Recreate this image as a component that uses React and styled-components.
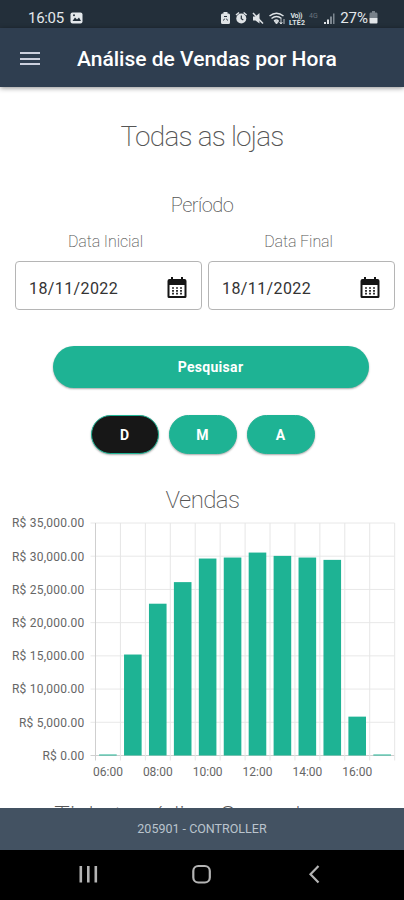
import styled, { createGlobalStyle } from 'styled-components'

const hours = [
  { hour: '06:00', total: 100 },
  { hour: '07:00', total: 15200 },
  { hour: '08:00', total: 22850 },
  { hour: '09:00', total: 26100 },
  { hour: '10:00', total: 29650 },
  { hour: '11:00', total: 29800 },
  { hour: '12:00', total: 30550 },
  { hour: '13:00', total: 30050 },
  { hour: '14:00', total: 29800 },
  { hour: '15:00', total: 29450 },
  { hour: '16:00', total: 5850 },
  { hour: '17:00', total: 100 },
]

const ticks = [0, 5000, 10000, 15000, 20000, 25000, 30000, 35000]

const formatMoney = (value) =>
  'R$ ' + value.toLocaleString('en-US', { minimumFractionDigits: 2 })

export default function App() {
  return (
    <Screen>
      <GlobalStyle />
      <StatusBar>
        <Clock>16:05</Clock>
        <PictureIcon />
        <Spacer />
        <StatusIcons />
        <Battery>27%</Battery>
        <BatteryIcon />
      </StatusBar>

      <Header>
        <Burger aria-label="Menu">
          <span />
          <span />
          <span />
        </Burger>
        <Title>Análise de Vendas por Hora</Title>
      </Header>

      <Content>
        <StoreName>Todas as lojas</StoreName>
        <Period>Período</Period>
        <Dates>
          <DateField label="Data Inicial" value="18/11/2022" />
          <DateField label="Data Final" value="18/11/2022" />
        </Dates>
        <Search>Pesquisar</Search>
        <Filters>
          <Pill $active>D</Pill>
          <Pill>M</Pill>
          <Pill>A</Pill>
        </Filters>
        <ChartTitle>Vendas</ChartTitle>
        <SalesChart />
        <NextTitle>Ticket médio - Operadores</NextTitle>
      </Content>

      <Footer>205901 - CONTROLLER</Footer>
      <NavBar>
        <svg width="404" height="50" fill="none" stroke="#b4b4b4" strokeWidth="2.2">
          <path d="M80.8 16v16.500M88.300 16v16.500M95.800 16v16.500" strokeWidth="2.600" />
          <rect x="193.300" y="16" width="16.500" height="16.500" rx="5" />
          <path d="M318.500 16l-8 8.200 8 8.200" />
        </svg>
      </NavBar>
    </Screen>
  )
}

function DateField({ label, value }) {
  return (
    <Field>
      <Label>{label}</Label>
      <DateInput>
        <span>{value}</span>
        <CalendarIcon />
      </DateInput>
    </Field>
  )
}

function SalesChart() {
  const left = 95.5
  const top = 13
  const height = 232.5
  const bottom = top + height
  const step = 24.93
  const right = left + step * hours.length

  return (
    <Chart width="404" height="280">
      {ticks.map((tick) => {
        const y = bottom - (tick / 35000) * height
        return (
          <g key={tick}>
            <line x1={left - 5} x2={right} y1={y} y2={y} stroke={tick ? '#e8e8e8' : '#cfcfcf'} />
            <Money x="84.5" y={y + 4.3} textAnchor="end">{formatMoney(tick)}</Money>
          </g>
        )
      })}
      {[...hours, null].map((item, i) => (
        <line
          key={i}
          x1={left + i * step}
          x2={left + i * step}
          y1={top}
          y2={bottom + 5}
          stroke={i ? '#e6e6e6' : '#cfcfcf'}
        />
      ))}
      {hours.map((item, i) => {
        const barHeight = Math.max((item.total / 35000) * height, 1)
        return (
          <g key={item.hour}>
            <rect
              x={left + i * step + 3.6}
              y={bottom - barHeight}
              width="17.600"
              height={barHeight}
              fill="#1eb394"
            />
            {i % 2 === 0 && (
              <text x={left + (i + 0.5) * step} y={bottom + 20.5} textAnchor="middle">{item.hour}</text>
            )}
          </g>
        )
      })}
    </Chart>
  )
}

function CalendarIcon() {
  return (
    <svg width="20" height="22" viewBox="0 0 20 22">
      <path d="M4 0h2v2h8V0h2v2h1.500A2 2 0 0 1 19.500 4v15.500a1.500 1.500 0 0 1-1.500 1.500H2a1.500 1.500 0 0 1-1.500-1.500V4a2 2 0 0 1 2-2H4z" fill="#151515" />
      <path d="M2.500 8h15v11h-15z" fill="#fff" />
      <path d="M5 11h2m2 0h2m2 0h2M5 13.800h2m2 0h2m2 0h2M5 16.600h2m2 0h2m2 0h2" stroke="#333" strokeWidth="1.700" />
    </svg>
  )
}

function PictureIcon() {
  return (
    <svg width="13" height="12" viewBox="0 0 13 12">
      <rect x=".5" y=".5" width="12" height="11" rx="2" fill="#e4e8eb" />
      <path d="M2.500 9l2.500-3.500 2 2L9 5.500 11 9z" fill="#232f3a" />
      <circle cx="4" cy="3.300" r="1" fill="#232f3a" />
    </svg>
  )
}

function StatusIcons() {
  return (
    <svg width="118" height="16" viewBox="0 0 118 16" fill="#dfe3e6">
      <path d="M3.500 2h4v1.500h1Q10 3.500 10 5v7.500q0 1.500-1.500 1.500h-6Q1 14 1 12.500V5q0-1.500 1.500-1.500h1z" />
      <path d="M3.500 10.500l1-1.800M7.500 10.500l-1-1.800M4 6.500h3" stroke="#232f3a" />
      <circle cx="21.300" cy="8.500" r="5" />
      <path d="M16 5l3-2.500M26.600 5l-3-2.500" stroke="#dfe3e6" strokeWidth="1.500" />
      <path d="M21.300 5.500v3.200l2 1.200" fill="none" stroke="#232f3a" strokeWidth="1.200" />
      <path d="M33 6.500h2.500l4-3.500v10.500l-4-3H33z" />
      <path d="M33 3l10 10.500" stroke="#dfe3e6" strokeWidth="1.500" />
      <path d="M49.500 6q7-5.500 14 0M51.500 8.500q5-4 10 0M54 11q2.500-2 4.500 0" fill="none" stroke="#dfe3e6" strokeWidth="1.500" />
      <path d="M56.500 14l-2-2.500h4zM61 9v5m-1.500-1.500L61 14l1.500-1.500M64 14V9" stroke="#dfe3e6" strokeWidth=".8" />
      <text x="70.500" y="8" fontSize="7" fontWeight="700" textLength="12">Vo))</text>
      <text x="69" y="14.500" fontSize="7" fontWeight="700" textLength="16">LTE2</text>
      <text x="89" y="7.500" fontSize="7" fill="#69747e">4G</text>
      <path d="M104 12h2v2h-2zM107 9.500h2V14h-2z" />
      <path d="M110 6.500h2V14h-2zM113 3.500h1.500V14H113z" fill="#7d8790" />
    </svg>
  )
}

function BatteryIcon() {
  return (
    <svg width="9" height="13" viewBox="0 0 9 13">
      <path d="M3 0h3v1.500h1.500Q8.500 1.500 8.500 3v4H.5V3q0-1.500 1-1.500H3z" fill="#77818a" />
      <path d="M.5 7h8v4.500q0 1-1 1h-6q-1 0-1-1z" fill="#e2e6e9" />
    </svg>
  )
}

const GlobalStyle = createGlobalStyle`
  * {
    box-sizing: border-box;
  }
  body {
    margin: 0;
    background: #fff;
    font-family: Roboto, 'Liberation Sans', sans-serif;
  }
  h1, h2, h3 {
    margin: 0;
  }
`;

const Screen = styled.div`
  width: 404px;
  height: 900px;
  display: flex;
  flex-direction: column;
  overflow: hidden;
`;

const StatusBar = styled.div`
  height: 28px;
  flex-shrink: 0;
  display: flex;
  align-items: center;
  padding: 7px 26px 0 28px;
  background: #232f3a;
  color: #e4e8eb;
`;

const Clock = styled.span`
  font-size: 15px;
  line-height: 20px;
  margin-right: 6px;
  letter-spacing: -0.3px;
`;

const Spacer = styled.div`
  flex: 1;
`;

const Battery = styled.span`
  font-size: 15px;
  line-height: 20px;
  margin-left: 2px;
  margin-right: 1px;
`;

const Header = styled.header`
  height: 59px;
  flex-shrink: 0;
  display: flex;
  align-items: center;
  padding: 2px 0 0 20px;
  background: #2f3e50;
  box-shadow: 0 1px 5px rgba(0, 0, 0, 0.45);
  z-index: 1;
`;

const Burger = styled.button`
  display: flex;
  flex-direction: column;
  gap: 3.5px;
  width: 20px;
  margin: 0 37px 0 0;
  padding: 0;
  border: 0;
  background: none;
  span {
    height: 2px;
    background: #ccd0de;
  }
`;

const Title = styled.h1`
  color: #fff;
  font-size: 21px;
  font-weight: 500;
  white-space: nowrap;
`;

const Content = styled.main`
  height: 721px;
  flex-shrink: 0;
  display: flex;
  flex-direction: column;
  align-items: center;
  overflow: hidden;
  background: #fff;
  color: #555;
  > * {
    flex-shrink: 0;
  }
`;

const StoreName = styled.h2`
  margin-top: 33px;
  font-size: 28px;
  line-height: 34px;
  font-weight: 200;
  letter-spacing: -0.8px;
`;

const Period = styled.h3`
  margin-top: 39px;
  font-size: 20px;
  line-height: 24px;
  font-weight: 200;
  letter-spacing: -0.5px;
`;

const Dates = styled.div`
  display: flex;
  gap: 6px;
  margin-top: 15px;
  margin-left: 6px;
`;

const Field = styled.div`
  width: 187px;
`;

const Label = styled.div`
  height: 29px;
  font-size: 16px;
  line-height: 20px;
  font-weight: 200;
  letter-spacing: -0.1px;
  text-align: center;
  margin-left: -6px;
`;

const DateInput = styled.div`
  height: 49px;
  display: flex;
  align-items: center;
  justify-content: space-between;
  padding: 5px 14px 0 13px;
  border: 1px solid #b5b5b5;
  border-radius: 4px;
  color: #333;
  font-size: 16px;
  letter-spacing: 0.4px;
`;

const Search = styled.button`
  width: 316px;
  height: 42px;
  margin: 36px 0 0 17px;
  border: 0;
  border-radius: 22px;
  background: #1eb394;
  box-shadow: 0 1px 2px rgba(0, 0, 0, 0.35);
  color: #fff;
  font-family: inherit;
  font-size: 14px;
  font-weight: 700;
  letter-spacing: 0.3px;
`;

const Filters = styled.div`
  display: flex;
  gap: 10px;
  margin-top: 27px;
  margin-left: 1px;
`;

const Pill = styled.button`
  width: 68px;
  height: 39px;
  padding: 0;
  border: 1.5px solid #1eb394;
  border-radius: 20px;
  background: ${(props) => (props.$active ? '#171717' : '#1eb394')};
  box-shadow: 0 1px 2px rgba(0, 0, 0, 0.35);
  color: #fff;
  font-family: inherit;
  font-size: 14px;
  font-weight: 700;
`;

const ChartTitle = styled.h3`
  margin-top: 32px;
  margin-left: 1px;
  font-size: 24px;
  line-height: 28px;
  font-weight: 200;
  letter-spacing: -0.6px;
`;

const Chart = styled.svg`
  margin-top: -4px;
  text {
    fill: #666;
    font-size: 12px;
  }
`;

const Money = styled.text`
  letter-spacing: 0.22px;
`;

const NextTitle = styled.h3`
  margin-top: 11px;
  font-size: 26px;
  line-height: 30px;
  font-weight: 200;
  white-space: nowrap;
`;

const Footer = styled.footer`
  height: 42px;
  flex-shrink: 0;
  background: #435262;
  color: #bac4cd;
  font-size: 12.5px;
  line-height: 42px;
  text-align: center;
`;

const NavBar = styled.nav`
  height: 50px;
  flex-shrink: 0;
  background: #000;
`;
